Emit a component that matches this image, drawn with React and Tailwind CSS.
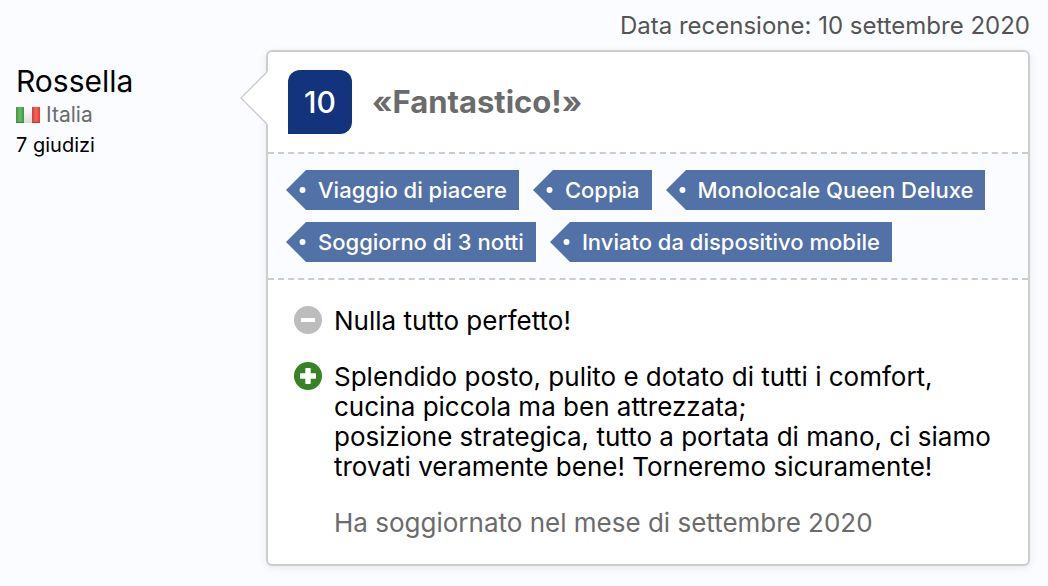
import React from "react";

const tags = [
  "Viaggio di piacere",
  "Coppia",
  "Monolocale Queen Deluxe",
  "Soggiorno di 3 notti",
  "Inviato da dispositivo mobile",
];

const ItalyFlag = () => (
  <svg width="24" height="16" viewBox="0 0 24 16" aria-hidden="true">
    <defs>
      <linearGradient id="green" x1="0" x2="1" y1="0" y2="0">
        <stop offset="0" stopColor="#3c9a3a" />
        <stop offset="0.5" stopColor="#6cb968" />
        <stop offset="1" stopColor="#3f9440" />
      </linearGradient>
      <linearGradient id="white" x1="0" x2="0" y1="0" y2="1">
        <stop offset="0" stopColor="#ffffff" />
        <stop offset="1" stopColor="#dcdcdc" />
      </linearGradient>
      <linearGradient id="red" x1="0" x2="1" y1="0" y2="0">
        <stop offset="0" stopColor="#d93a32" />
        <stop offset="0.5" stopColor="#f0675c" />
        <stop offset="1" stopColor="#e23b30" />
      </linearGradient>
    </defs>
    <rect width="8" height="16" fill="url(#green)" />
    <rect x="8" width="8" height="16" fill="url(#white)" />
    <rect x="16" width="8" height="16" fill="url(#red)" />
    <path d="M0 15.500H8" stroke="#2f8a30" />
    <path d="M16 15.500H24" stroke="#cc3028" />
  </svg>
);

const MinusIcon = () => (
  <svg width="28" height="28" viewBox="0 0 28 28" aria-hidden="true">
    <circle cx="14" cy="14" r="14" fill="#bdbdbd" />
    <rect x="7" y="12" width="14" height="4" rx="0.5" fill="#fff" />
  </svg>
);

const PlusIcon = () => (
  <svg width="28" height="28" viewBox="0 0 28 28" aria-hidden="true">
    <circle cx="14" cy="14" r="14" fill="#378323" />
    <path
      d="M12 6h4a.7.7 0 0 1 .7.7v4.600h4.600a.7.7 0 0 1 .7.700v4a.7.7 0 0 1-.7.700h-4.600v4.600a.7.7 0 0 1-.7.700h-4a.7.7 0 0 1-.7-.7v-4.600H6.700a.7.7 0 0 1-.7-.700v-4a.7.7 0 0 1 .7-.700h4.600V6.700A.7.7 0 0 1 12 6z"
      fill="#fff"
    />
  </svg>
);

const Tag = ({ children }) => (
  <li className="flex h-10">
    <svg width="20" height="40" viewBox="0 0 20 40" className="shrink-0" aria-hidden="true">
      <path d="M20 0V40L0 20z" fill="#5271a7" />
      <circle cx="16.500" cy="20" r="3" fill="#fff" />
    </svg>
    <span className="bg-[#5271a7] pr-3 pl-3 text-[22px] leading-10 font-medium whitespace-nowrap text-white">
      {children}
    </span>
  </li>
);

const Reviewer = () => (
  <div className="w-[250px] shrink-0 pt-[13px]">
    <h3 className="text-[30px] leading-9">Rossella</h3>
    <p className="flex items-center gap-1.5 text-[21px] leading-8 text-[#6b6b6b]">
      <ItalyFlag />
      Italia
    </p>
    <p className="text-[20px] leading-7">7 giudizi</p>
  </div>
);

const App = () => {
  return (
    <main className="min-h-screen bg-[#fbfcff] pr-[18px] pb-5 pl-4 font-[Inter,sans-serif] text-black">
      <p className="pt-2 text-right text-[24px] leading-9 text-[#545454]">
        Data recensione: 10 settembre 2020
      </p>

      <article className="mt-1.5 flex items-start">
        <Reviewer />

        <div className="relative min-w-0 flex-1 rounded-md border-2 border-[#cccccc] bg-white shadow-[0_2px_8px_rgba(0,0,0,0.08)]">
          {/* Arrow pointing at the reviewer */}
          <svg
            className="absolute top-[18px] -left-7"
            width="28"
            height="56"
            viewBox="0 0 28 56"
            aria-hidden="true"
          >
            <path d="M28 1L1 28L28 55z" fill="#fff" />
            <path d="M27 2L1 28L27 54" fill="none" stroke="#cccccc" strokeWidth="1.400" />
          </svg>

          <header className="flex h-[100px] items-center gap-5 px-5">
            <span className="flex size-16 items-center justify-center rounded-xl rounded-bl-none bg-[#13347c] text-[30px] font-medium text-white">
              10
            </span>
            <h2 className="text-[31px] font-bold text-[#6b6b6b]">«Fantastico!»</h2>
          </header>

          <ul className="flex flex-wrap gap-x-3.5 gap-y-3 border-y-2 border-dashed border-[#cccccc] bg-[#fbfcff] px-[18px] py-4">
            {tags.map((tag) => (
              <Tag key={tag}>{tag}</Tag>
            ))}
          </ul>

          <div className="p-[26px] text-[26px] leading-[30px]">
            <div className="flex gap-3">
              <span className="shrink-0">
                <MinusIcon />
              </span>
              <p>Nulla tutto perfetto!</p>
            </div>
            <div className="mt-[26px] flex gap-3">
              <span className="shrink-0">
                <PlusIcon />
              </span>
              <p>
                Splendido posto, pulito e dotato di tutti i comfort,
                <br />
                cucina piccola ma ben attrezzata;
                <br />
                posizione strategica, tutto a portata di mano, ci siamo trovati
                veramente bene! Torneremo sicuramente!
              </p>
            </div>
            <p className="mt-[26px] pl-10 text-[#6b6b6b]">
              Ha soggiornato nel mese di settembre 2020
            </p>
          </div>
        </div>
      </article>
    </main>
  );
};

export default App;
